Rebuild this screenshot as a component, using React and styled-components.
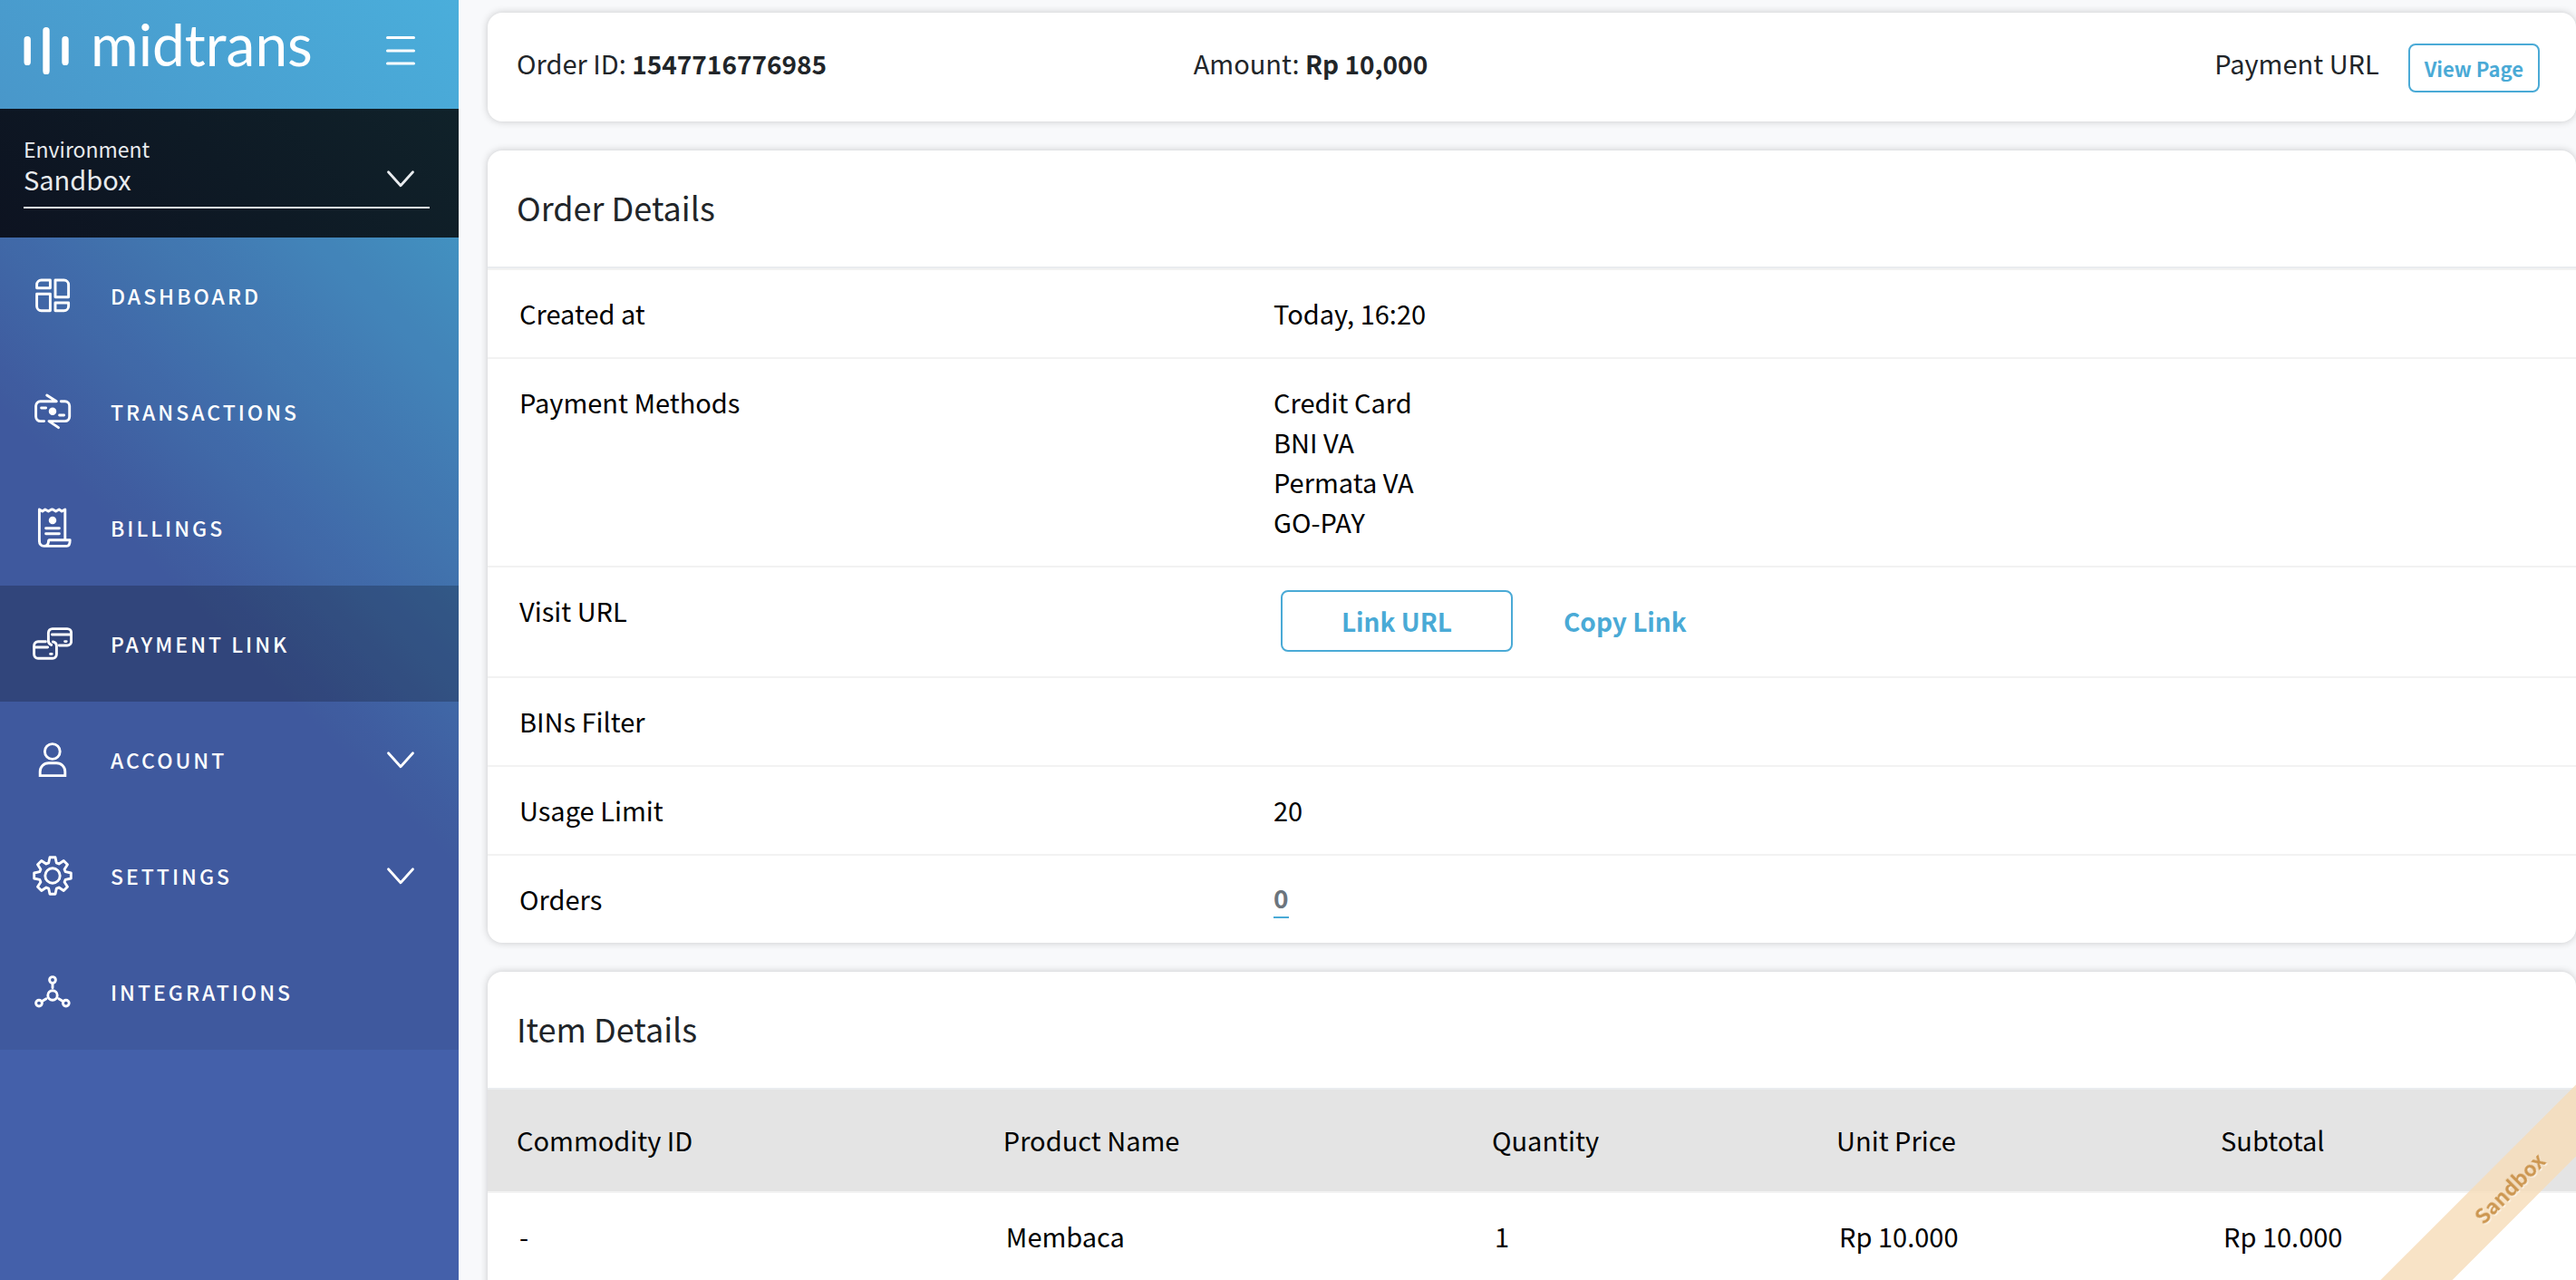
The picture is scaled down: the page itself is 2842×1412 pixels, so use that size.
import React from "react";
import styled, { createGlobalStyle, css } from "styled-components";

const GlobalStyle = createGlobalStyle`
  *, *::before, *::after { box-sizing: border-box; }
  body {
    margin: 0;
    background: #f8f9fb;
    color: #212529;
    font-family: "Noto Sans CJK SC", "Open Sans", sans-serif;
    font-size: 29px;
    line-height: 44px;
  }
  button, select { font: inherit; }
  a { color: inherit; text-decoration: none; }
`;

const Shell = styled.div`
  display: flex;
  height: 100vh;
  overflow: hidden;
`;

/* ---------- sidebar ---------- */

const Sidebar = styled.aside`
  flex: 0 0 506px;
  color: #fff;
  background: linear-gradient(225deg, #4ab3de 0%, #4460aa 50%);
`;

const SidebarHeader = styled.div`
  display: flex;
  align-items: flex-start;
  justify-content: space-between;
  padding: 30px 48px 38px 26px;
  background: linear-gradient(225deg, #4aaedb 0%, #4997ca 100%);
`;

const Brand = styled.a`
  display: flex;
  align-items: flex-start;
  gap: 22px;
`;

const Wordmark = styled.span`
  font-family: Lato, sans-serif;
  font-size: 64px;
  line-height: 38px;
`;

const IconButton = styled.button`
  display: flex;
  align-items: center;
  height: 52px;
  padding: 0;
  border: 0;
  background: none;
  color: inherit;
`;

const Environment = styled.div`
  padding: 28px 32px 32px 26px;
  background: linear-gradient(225deg, #10222a 0%, #0e1a25 50%, #0d1321 100%);
  color: #e8ebee;
`;

const EnvironmentLabel = styled.label`
  display: block;
  font-size: 23px;
  line-height: 32px;
`;

const SelectField = styled.div`
  position: relative;
  padding-bottom: 14px;
  border-bottom: 2px solid #e8eef0;

  svg {
    position: absolute;
    top: 0;
    right: 16px;
    pointer-events: none;
  }
`;

const Select = styled.select`
  display: block;
  width: 100%;
  height: 34px;
  padding: 0;
  border: 0;
  appearance: none;
  background: none;
  color: inherit;
  line-height: 34px;
`;

const Menu = styled.ul`
  margin: 0;
  padding: 0;
  list-style: none;
  background: rgba(0, 0, 0, 0.07);
`;

const MenuEntry = styled.a`
  display: flex;
  align-items: center;
  gap: 42px;
  width: 100%;
  height: 128px;
  padding: 0 48px 0 36px;
  border: 0;
  background: ${(p) => (p.$active ? "rgba(0, 0, 0, 0.22)" : "none")};
  color: #fff;
  font-size: 23px;
  font-weight: 500;
  letter-spacing: 3px;
  text-align: left;
`;

const MenuLabel = styled.span`
  flex: 1;
`;

/* ---------- content ---------- */

const Content = styled.main`
  flex: 1;
  min-width: 0;
  display: flex;
  flex-direction: column;
  gap: 32px;
  padding: 14px 0 32px 32px;
  overflow-y: auto;
  scrollbar-width: none;
`;

const Card = styled.section`
  flex: none;
  border-radius: 16px;
  background: #fff;
  box-shadow: 0 0 8px rgba(0, 0, 0, 0.2);
`;

const Summary = styled(Card)`
  display: grid;
  grid-template-columns: repeat(3, 1fr);
  padding: 34px 32px 32px;
  line-height: 42px;

  p { margin: 0; }
`;

const Strong = styled.strong`
  font-size: 28px;
  font-weight: 600;
`;

const SummaryAction = styled.div`
  display: flex;
  justify-content: flex-end;
  gap: 32px;
  padding-right: 8px;
`;

const CardTitle = styled.h2`
  margin: 0;
  padding: 38px 32px 42px;
  border-bottom: 2px solid #e9ecef;
  font-size: 36px;
  font-weight: 400;
  line-height: 48px;
`;

const Details = styled.dl`
  margin: 0;
  color: #000;
`;

const DetailRow = styled.div`
  display: grid;
  grid-template-columns: 13fr 23fr;
  padding: 25px 0 27px;
  border-top: 2px solid #f2f2f2;
`;

const Term = styled.dt`
  padding-left: 35px;
`;

const Value = styled.dd`
  margin: 0;
  padding-left: 35px;
`;

const PlainList = styled.ul`
  margin: 0;
  padding: 0;
  list-style: none;
`;

const LinkActions = styled.div`
  display: flex;
  gap: 16px;
  padding-left: 8px;
`;

const Button = styled.button`
  border: 2px solid ${(p) => (p.$ghost ? "transparent" : "#4aaad6")};
  border-radius: 8px;
  background: none;
  color: #4aaad6;
  font-weight: 600;
  white-space: nowrap;
  ${(p) =>
    p.$small
      ? css`
          height: 54px;
          padding: 0 16px;
          font-size: 22px;
          line-height: 50px;
        `
      : css`
          min-width: ${p.$ghost ? "0" : "256px"};
          height: 68px;
          padding: 0 38px;
          font-size: 28px;
          line-height: 64px;
        `}
`;

const CountLink = styled.a`
  display: inline-block;
  vertical-align: top;
  border-bottom: 2px solid #4aaad6;
  color: #6c757d;
  font-size: 28px;
  font-weight: 600;
  line-height: 42px;
`;

const ItemTable = styled.table`
  width: 100%;
  margin-bottom: 32px;
  border-spacing: 0;
  table-layout: fixed;
  color: #000;
  text-align: left;
`;

const HeadCell = styled.th`
  width: ${(p) => p.$width};
  padding: 33px 32px 35px;
  background: #e4e4e4;
  font-weight: 400;
`;

const Cell = styled.td`
  padding: 25px 35px 27px;
  border-top: 2px solid #f2f2f2;
`;

const Ribbon = styled.div`
  position: fixed;
  right: -126px;
  bottom: 74px;
  width: 400px;
  transform: rotate(-45deg);
  background: rgba(246, 220, 184, 0.8);
  color: #cc9650;
  font-size: 23px;
  font-weight: 600;
  line-height: 56px;
  text-align: center;
  text-shadow: 0 2px 0 rgba(255, 255, 255, 0.5);
  pointer-events: none;
`;

/* ---------- drawings ---------- */

const IconSvg = ({ children }) => (
  <svg width="44" height="44" viewBox="0 0 44 44" fill="none" stroke="currentColor"
    strokeWidth="2.9" strokeLinecap="round" strokeLinejoin="round" aria-hidden="true">
    {children}
  </svg>
);

const Chevron = () => (
  <svg width="32" height="34" viewBox="0 0 32 34" fill="none" stroke="currentColor"
    strokeWidth="2.8" strokeLinecap="round" strokeLinejoin="round" aria-hidden="true">
    <path d="M2.5 9.8 16 24.8 29.5 9.8" />
  </svg>
);

const BrandMark = () => (
  <svg width="52" height="52" viewBox="0 0 52 52" fill="none" stroke="#fff"
    strokeWidth="7.4" strokeLinecap="round" aria-hidden="true">
    <path d="M4.2 13.8V38.4M25 3.7V48.6M46 13.8V38.4" />
  </svg>
);

const Burger = () => (
  <svg width="32" height="34" viewBox="0 0 32 34" fill="none" stroke="currentColor"
    strokeWidth="3" strokeLinecap="round" aria-hidden="true">
    <path d="M1.5 2.5h29M1.5 17h29M1.5 31h29" />
  </svg>
);

const gearPath = (() => {
  const tooth = [[-4.3, -14.2], [-3, -20.3], [3, -20.3], [4.3, -14.2]];
  const points = [];
  for (let i = 0; i < 8; i += 1) {
    const a = (i * Math.PI) / 4;
    tooth.forEach(([x, y]) => {
      points.push([
        (22 + x * Math.cos(a) - y * Math.sin(a)).toFixed(2),
        (22 + x * Math.sin(a) + y * Math.cos(a)).toFixed(2),
      ]);
    });
  }
  return `M${points.map((p) => p.join(" ")).join("L")}Z`;
})();

const icons = {
  dashboard: (
    <>
      <path d="M19.4 5v8.8H4.6V10a5 5 0 0 1 5-5z" />
      <path d="M25 5h9.6a5 5 0 0 1 5 5v13.8H25z" />
      <path d="M4.6 20.2h14.8v18.6H9.6a5 5 0 0 1-5-5z" />
      <path d="M25 30h14.6v3.8a5 5 0 0 1-5 5H25z" />
    </>
  ),
  transactions: (
    <>
      <path d="M15.7 4 26.3 10.8H8.6a5 5 0 0 0-5 5v11.8a5 5 0 0 0 5 5h4" />
      <path d="M31.3 10.8h4.4a5 5 0 0 1 5 5v11.8a5 5 0 0 1-5 5H18L28.5 39.6" />
      <path d="M9.6 18h5M29.6 26h5" />
      <circle cx="22" cy="21.8" r="2.8" fill="currentColor" />
    </>
  ),
  billings: (
    <>
      <path d="M7.4 36.8V2l3.4 2 3-2 3.6 2 3.4-2h1.4l3.4 2 3.6-2 3 2 3.6-2v33.4" />
      <path d="M7.4 36.8c0 3.4 2 5.6 5 5.6h25.4c2.4 0 3.4-2.4 3.4-6.6H18.4c-1 0-.8 1-1 2.4-.3 2.6-2 4.2-5 4.2" />
      <path d="M14.6 22.8h14.8M14.6 28.8h14.8" />
      <circle cx="22" cy="14" r="2.8" fill="currentColor" />
    </>
  ),
  link: (
    <>
      <path d="M20.6 23.4c-2.2-.8-3.2-2.2-3.2-4.4v-9a4.4 4.4 0 0 1 4.4-4.4h16.4a4.4 4.4 0 0 1 4.4 4.4v9.6a4.4 4.4 0 0 1-4.4 4.4h-9" />
      <path d="M14.4 19.8H6a4.4 4.4 0 0 0-4.4 4.4v9.6A4.4 4.4 0 0 0 6 38.2h16a4.4 4.4 0 0 0 4.4-4.4v-9c0-2.4-1.4-4.4-4-4.8" />
      <path d="M21.4 12h20.4M2 26h14.6M35.6 19.6h1.6M19.6 33.4h1.6" />
    </>
  ),
  account: (
    <>
      <circle cx="21.8" cy="13" r="8.4" />
      <path strokeLinejoin="miter" d="M8.2 39.6v-4.4a9.4 9.4 0 0 1 9.4-9.4h8.8a9.4 9.4 0 0 1 9.4 9.4v4.4z" />
    </>
  ),
  settings: (
    <>
      <circle cx="22" cy="22" r="8.2" />
      <path d={gearPath} />
    </>
  ),
  integrations: (
    <>
      <circle cx="22" cy="26" r="5.2" />
      <circle cx="22" cy="9" r="3.4" />
      <circle cx="7" cy="34.6" r="3.4" />
      <circle cx="36.8" cy="34.6" r="3.4" />
      <path d="M22 12.8v5M10.4 32.6l4.6-2.8M33.4 32.6l-4.6-2.8" />
    </>
  ),
};

/* ---------- data ---------- */

const menu = [
  { icon: "dashboard", label: "DASHBOARD" },
  { icon: "transactions", label: "TRANSACTIONS" },
  { icon: "billings", label: "BILLINGS" },
  { icon: "link", label: "PAYMENT LINK", active: true },
  { icon: "account", label: "ACCOUNT", expandable: true },
  { icon: "settings", label: "SETTINGS", expandable: true },
  { icon: "integrations", label: "INTEGRATIONS" },
];

const methods = ["Credit Card", "BNI VA", "Permata VA", "GO-PAY"];

const columns = [
  { title: "Commodity ID", width: "23.3%" },
  { title: "Product Name", width: "23.4%" },
  { title: "Quantity", width: "16.5%" },
  { title: "Unit Price", width: "18.4%" },
  { title: "Subtotal", width: "18.4%" },
];

const items = [["-", "Membaca", "1", "Rp 10.000", "Rp 10.000"]];

const Detail = ({ label, children }) => (
  <DetailRow>
    <Term>{label}</Term>
    <Value>{children}</Value>
  </DetailRow>
);

export default function App() {
  return (
    <Shell>
      <GlobalStyle />
      <Sidebar>
        <SidebarHeader>
          <Brand href="#">
            <BrandMark />
            <Wordmark>midtrans</Wordmark>
          </Brand>
          <IconButton type="button" aria-label="Toggle menu">
            <Burger />
          </IconButton>
        </SidebarHeader>
        <Environment>
          <EnvironmentLabel htmlFor="environment">Environment</EnvironmentLabel>
          <SelectField>
            <Select id="environment" defaultValue="Sandbox">
              <option>Sandbox</option>
              <option>Production</option>
            </Select>
            <Chevron />
          </SelectField>
        </Environment>
        <nav>
          <Menu>
            {menu.map(({ icon, label, active, expandable }) => (
              <li key={label}>
                <MenuEntry
                  as={expandable ? "button" : "a"}
                  href={expandable ? undefined : "#"}
                  type={expandable ? "button" : undefined}
                  aria-current={active ? "page" : undefined}
                  $active={active}
                >
                  <IconSvg>{icons[icon]}</IconSvg>
                  <MenuLabel>{label}</MenuLabel>
                  {expandable && <Chevron />}
                </MenuEntry>
              </li>
            ))}
          </Menu>
        </nav>
      </Sidebar>

      <Content>
        <Summary>
          <p>Order ID: <Strong>1547716776985</Strong></p>
          <p>Amount: <Strong>Rp 10,000</Strong></p>
          <SummaryAction>
            <span>Payment URL</span>
            <Button type="button" $small>View Page</Button>
          </SummaryAction>
        </Summary>

        <Card>
          <CardTitle>Order Details</CardTitle>
          <Details>
            <Detail label="Created at">Today, 16:20</Detail>
            <Detail label="Payment Methods">
              <PlainList>
                {methods.map((m) => <li key={m}>{m}</li>)}
              </PlainList>
            </Detail>
            <Detail label="Visit URL">
              <LinkActions>
                <Button type="button">Link URL</Button>
                <Button type="button" $ghost>Copy Link</Button>
              </LinkActions>
            </Detail>
            <Detail label="BINs Filter" />
            <Detail label="Usage Limit">20</Detail>
            <Detail label="Orders"><CountLink href="#">0</CountLink></Detail>
          </Details>
        </Card>

        <Card>
          <CardTitle>Item Details</CardTitle>
          <ItemTable>
            <thead>
              <tr>
                {columns.map((c) => (
                  <HeadCell key={c.title} scope="col" $width={c.width}>{c.title}</HeadCell>
                ))}
              </tr>
            </thead>
            <tbody>
              {items.map((row) => (
                <tr key={row[1]}>
                  {row.map((value, i) => <Cell key={columns[i].title}>{value}</Cell>)}
                </tr>
              ))}
            </tbody>
          </ItemTable>
        </Card>
      </Content>

      <Ribbon>Sandbox</Ribbon>
    </Shell>
  );
}
